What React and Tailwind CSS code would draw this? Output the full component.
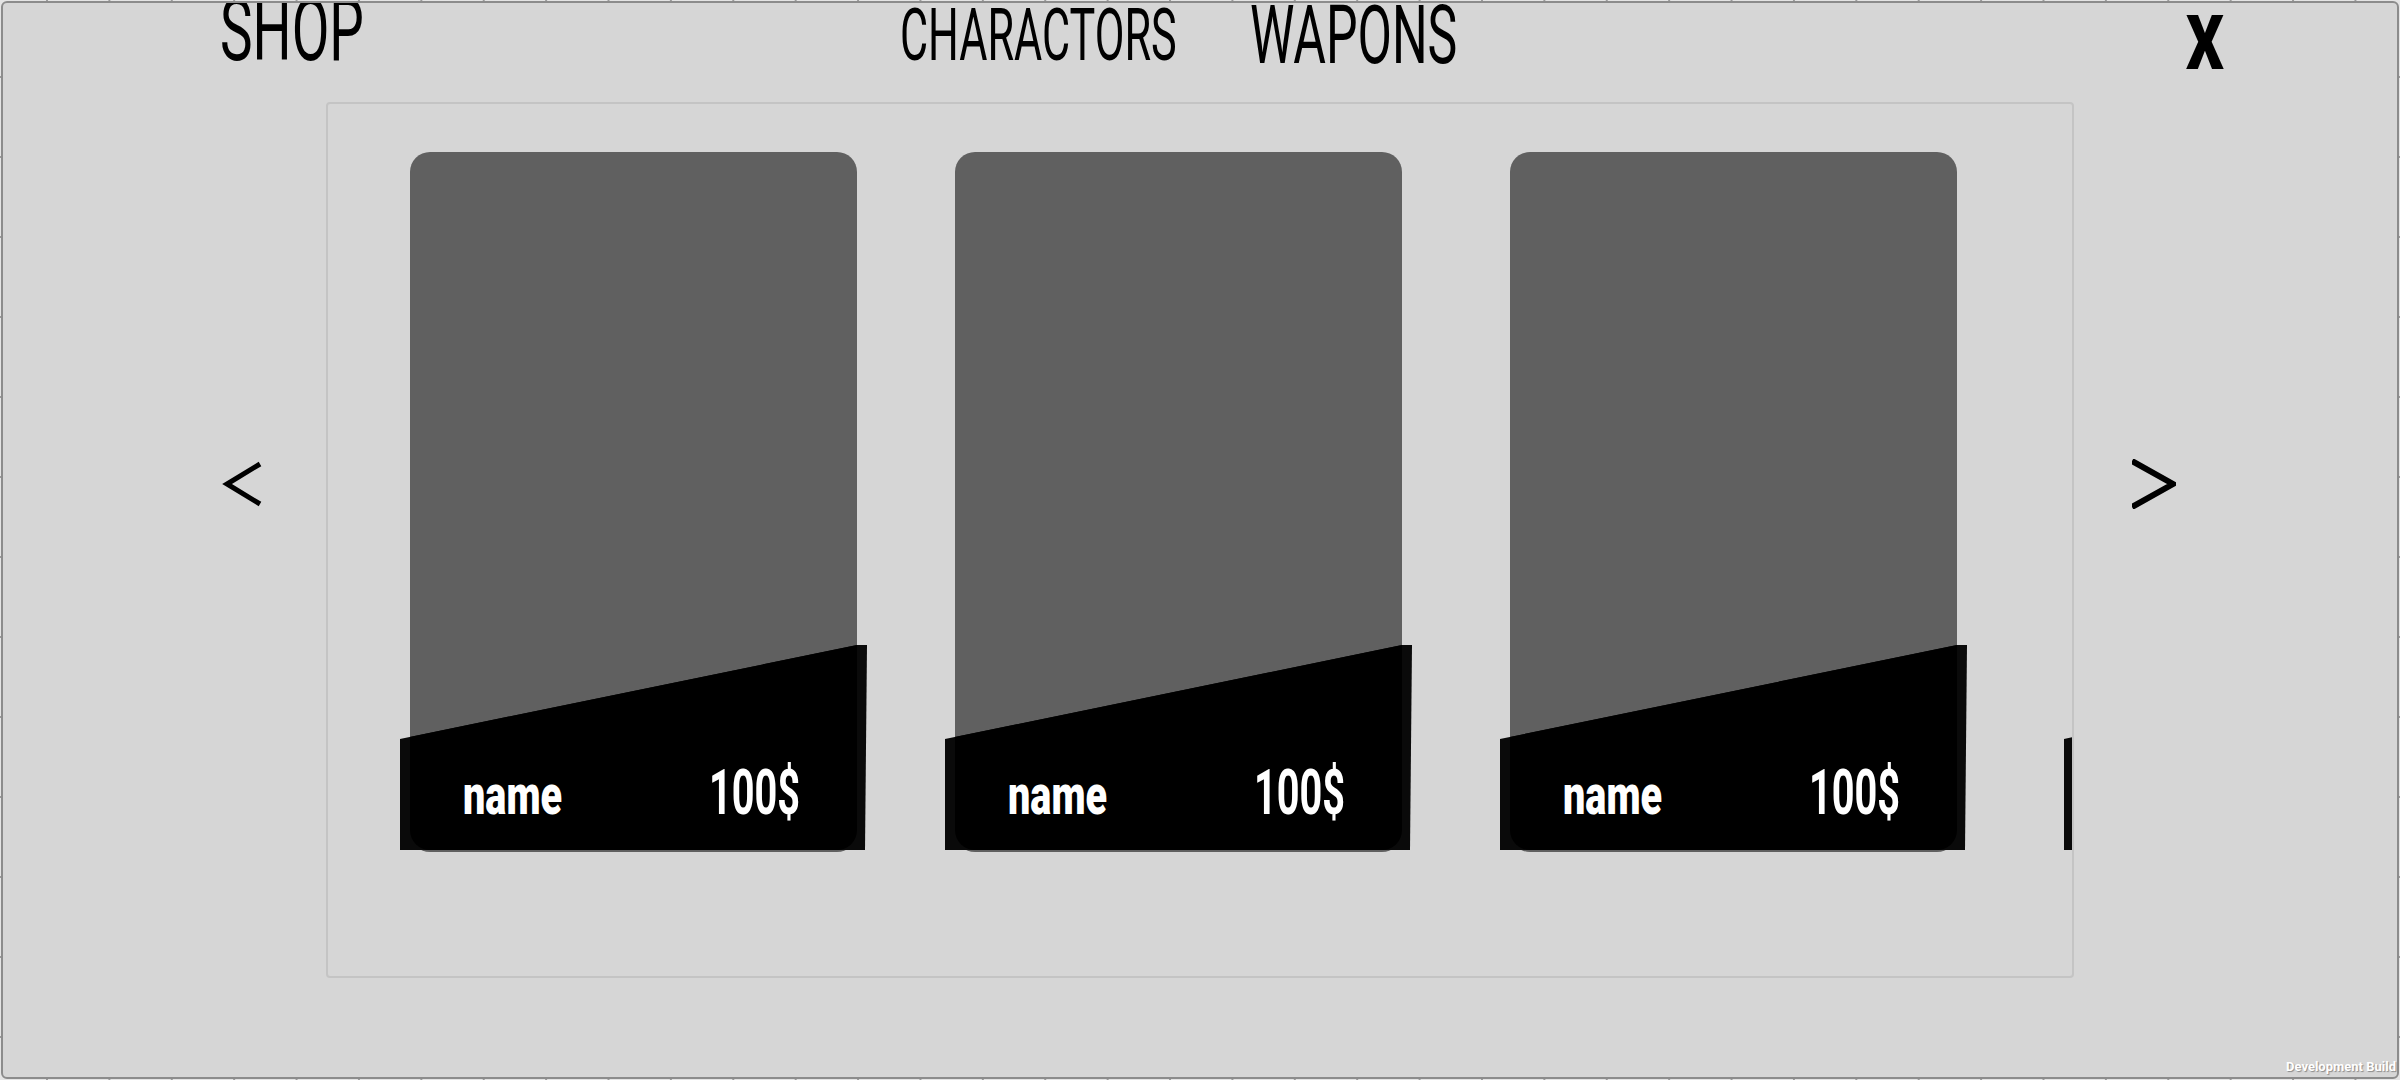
const cards = [
  { id: 1, mr: 'mr-[98px]' },
  { id: 2, mr: 'mr-[108px]' },
  { id: 3, mr: 'mr-[117px]' },
  { id: 4, mr: '' },
];

const roboto = "font-['Roboto','Liberation_Sans',sans-serif]";

const Card = ({ mr }) => (
  <div className={`relative w-[447px] h-[700px] shrink-0 rounded-[20px] bg-[#606060] ${mr}`}>
    <div className="absolute left-[-10px] top-[493px] w-[467px] h-[205px] bg-[#0a0a0a] [clip-path:polygon(0_94px,457px_0,100%_0,465px_100%,0_100%)]">
      <div className="absolute left-[10px] top-0 w-[447px] h-full rounded-b-[20px] bg-black" />
      <div className={`relative flex items-baseline justify-between pt-[116px] pl-[63px] pr-[67px] text-white whitespace-nowrap leading-none font-black ${roboto}`}>
        <span className="inline-block w-[103px] origin-left text-[55px] scale-x-[0.72]">name</span>
        <span className="inline-block w-[91px] origin-left text-[63px] font-bold scale-x-[0.63]">100$</span>
      </div>
    </div>
  </div>
);

const App = () => {
  return (
    <div className="w-[2400px] h-[1080px] overflow-hidden p-[1px] bg-[#e4e4e4] bg-[linear-gradient(90deg,#9a9a9a_2px,transparent_2px),linear-gradient(#9a9a9a_2px,transparent_2px)] bg-[size:62.4px_80px] bg-[position:46px_76px]">
      <div className={`relative w-full h-full rounded-[6px] border-2 border-[#8c8c8c] bg-[#d6d6d6] overflow-hidden text-black ${roboto}`}>
        <div className="flex items-start h-[99px] pl-[217px] whitespace-nowrap leading-none">
          <div className="w-[680px] shrink-0">
            <span className="inline-block origin-left mt-[-16px] text-[87px] scale-x-[0.63]">SHOP</span>
          </div>
          <div className="w-[350px] shrink-0">
            <span className="inline-block origin-left mt-[-3px] text-[72px] scale-x-[0.6]">CHARACTORS</span>
          </div>
          <div className="w-[936px] shrink-0">
            <span className="inline-block origin-left mt-[-9px] text-[82px] scale-x-[0.61]">WAPONS</span>
          </div>
          <span className="inline-block origin-left mt-[2px] text-[76px] font-black scale-x-[0.78]">X</span>
        </div>
        <div className="flex items-start pl-[219px]">
          <svg className="mt-[357px] mr-[64px] shrink-0" width="40" height="50" viewBox="0 0 40 50">
            <polyline points="38,5 5,25 38,45" fill="none" stroke="#000" strokeWidth="5" />
          </svg>
          <div className="w-[1748px] h-[876px] shrink-0 rounded-[4px] border-2 border-[#c4c4c4] overflow-hidden">
            <div className="flex pt-[48px] pl-[82px]">
              {cards.map(c => <Card key={c.id} mr={c.mr} />)}
            </div>
          </div>
          <svg className="mt-[357px] ml-[58px] shrink-0" width="44" height="50" viewBox="0 0 44 50">
            <polyline points="0,2 41,25 0,48" fill="none" stroke="#000" strokeWidth="6" />
          </svg>
        </div>
        <span className="absolute right-[1px] bottom-[4px] text-[13px] leading-none font-bold text-white [text-shadow:1px_1px_1px_#8a8a8a]">Development Build</span>
      </div>
    </div>
  );
};

export default App;
